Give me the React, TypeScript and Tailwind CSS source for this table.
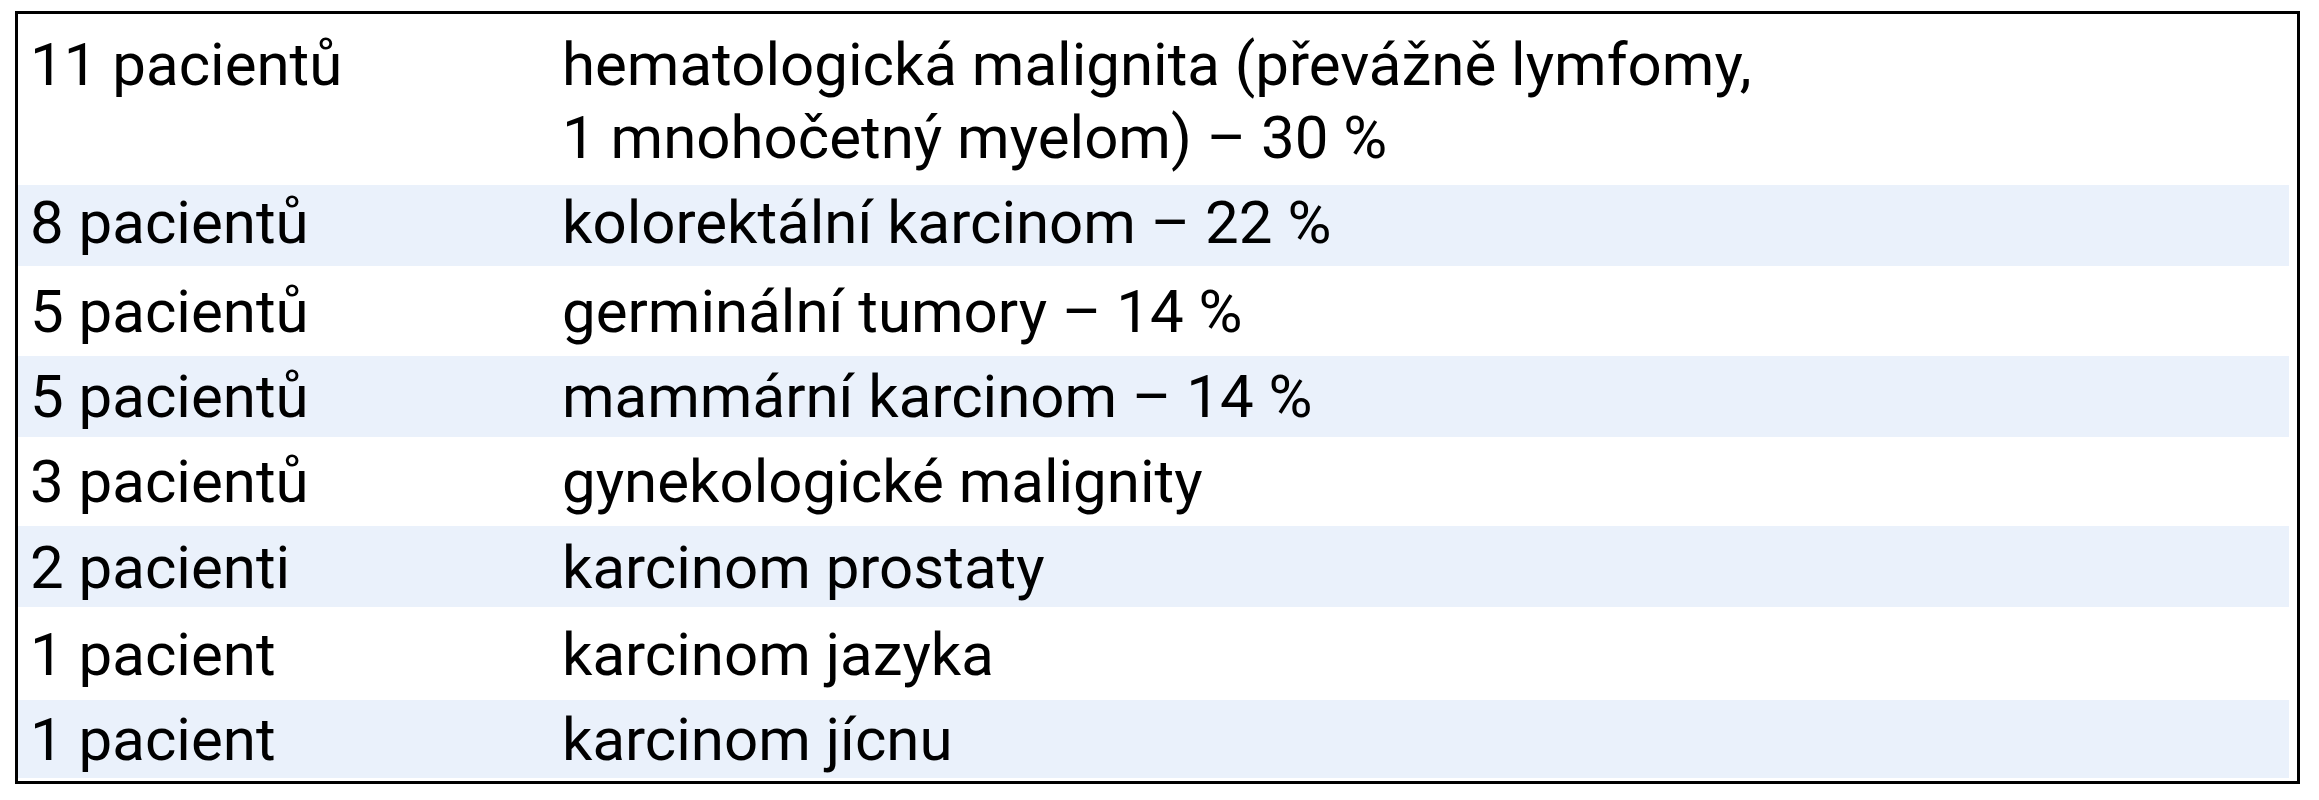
import React from "react";

type Row = { left: string; right: React.ReactNode; cls: string };

const rows: Row[] = [
  {
    left: "11 pacientů",
    right: (
      <>
        hematologická malignita (převážně lymfomy,
        <br />
        1 mnohočetný myelom) – 30 %
      </>
    ),
    cls: "h-[171px] pt-[14px] bg-white",
  },
  { left: "8 pacientů", right: "kolorektální karcinom – 22 %", cls: "h-[81px] pt-[1px] bg-[#eaf1fb]" },
  { left: "5 pacientů", right: "germinální tumory – 14 %", cls: "h-[90px] pt-[9px] bg-white" },
  { left: "5 pacientů", right: "mammární karcinom – 14 %", cls: "h-[81px] pt-[4px] bg-[#eaf1fb]" },
  { left: "3 pacientů", right: "gynekologické malignity", cls: "h-[89px] pt-[8px] bg-white" },
  { left: "2 pacienti", right: "karcinom prostaty", cls: "h-[81px] pt-[5px] bg-[#eaf1fb]" },
  { left: "1 pacient", right: "karcinom jazyka", cls: "h-[93px] pt-[11px] bg-white" },
  { left: "1 pacient", right: "karcinom jícnu", cls: "h-[78px] pt-[3px] bg-[#eaf1fb]" },
];

export default function App() {
  return (
    <div className="min-h-[800px] bg-white pt-[11px] pl-[15px] font-['Roboto',sans-serif] text-black">
      <div className="w-[2285px] border-[3px] border-black pr-[8px] pb-[3px]">
        {rows.map((r, i) => (
          <div key={i} className={`grid grid-cols-[532px_1fr] text-[60px] leading-[73px] ${r.cls}`}>
            <div className="pl-[12px]">{r.left}</div>
            <div className="pl-[12px]">{r.right}</div>
          </div>
        ))}
      </div>
    </div>
  );
}
